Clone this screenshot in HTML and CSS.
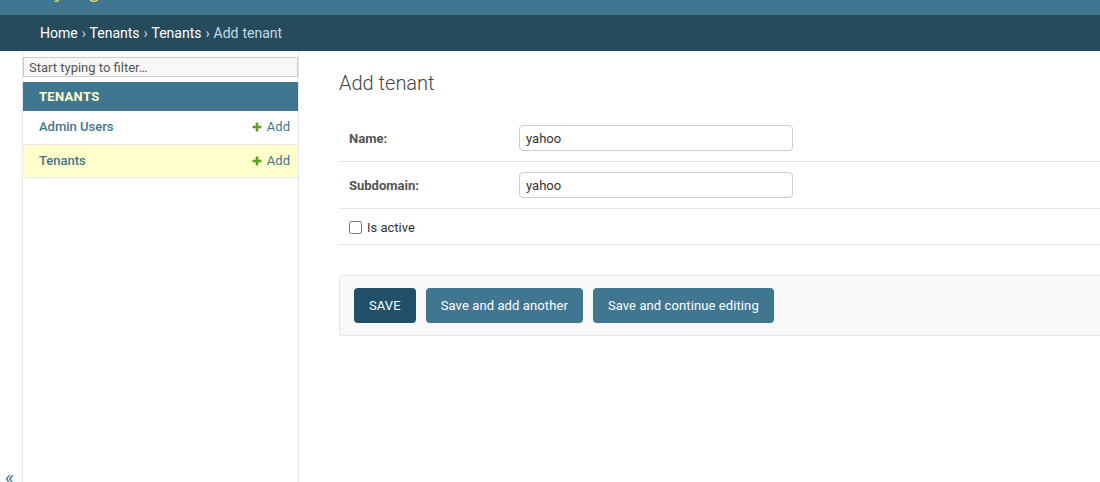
FILE: index.html
```html
<!DOCTYPE html>
<html lang="en">
<head>
<meta charset="utf-8">
<title>Add tenant | Django site admin</title>
<link rel="stylesheet" href="styles.css">
</head>
<body>
<header class="header">
  <div class="branding">Django administration</div>
</header>
<nav class="breadcrumbs">
  <a href="#">Home</a> › <a href="#">Tenants</a> › <a href="#">Tenants</a> › Add tenant
</nav>
<div class="main">
  <div class="toggle"><span class="toggle-glyph">«</span></div>
  <aside class="sidebar">
    <input class="nav-filter" type="search" placeholder="Start typing to filter…">
    <table class="app-module">
      <caption><a class="section" href="#">TENANTS</a></caption>
      <tr>
        <th class="model"><a href="#">Admin Users</a></th>
        <td class="addlink-cell"><a class="addlink" href="#"><svg class="plus" width="10" height="10" viewBox="0 0 10 10"><rect x="3.7" y="0.5" width="2.6" height="9" fill="#5fa225"/><rect x="0.5" y="3.7" width="9" height="2.6" fill="#5fa225"/></svg>Add</a></td>
      </tr>
      <tr class="current">
        <th class="model"><a href="#">Tenants</a></th>
        <td class="addlink-cell"><a class="addlink" href="#"><svg class="plus" width="10" height="10" viewBox="0 0 10 10"><rect x="3.7" y="0.5" width="2.6" height="9" fill="#5fa225"/><rect x="0.5" y="3.7" width="9" height="2.6" fill="#5fa225"/></svg>Add</a></td>
      </tr>
    </table>
  </aside>
  <div class="content">
    <h1 class="title">Add tenant</h1>
    <form class="form">
      <fieldset class="fieldset">
        <div class="form-row">
          <label class="field-label" for="id_name">Name:</label>
          <input class="text-field" id="id_name" type="text" value="yahoo">
        </div>
        <div class="form-row">
          <label class="field-label" for="id_subdomain">Subdomain:</label>
          <input class="text-field" id="id_subdomain" type="text" value="yahoo">
        </div>
        <div class="form-row checkbox-row">
          <input class="checkbox" id="id_is_active" type="checkbox">
          <label class="checkbox-label" for="id_is_active">Is active</label>
        </div>
      </fieldset>
      <div class="submit-row">
        <button class="btn btn-default" type="button">SAVE</button>
        <button class="btn" type="button">Save and add another</button>
        <button class="btn" type="button">Save and continue editing</button>
      </div>
    </form>
  </div>
</div>
</body>
</html>
```

FILE: styles.css
```css
* { box-sizing: border-box; }

html, body {
  margin: 0;
  padding: 0;
  height: 100%;
  overflow: hidden;
}

body {
  font-family: Roboto, "Liberation Sans", sans-serif;
  font-size: 14px;
  color: #333;
  background: #fff;
}

a { text-decoration: none; }

.header {
  height: 15px;
  background: #417690;
  overflow: hidden;
  padding: 0 40px;
}

.branding {
  margin-top: -23px;
  font-size: 24px;
  line-height: 24px;
  font-weight: 300;
  color: #f5dd5d;
  white-space: nowrap;
}

.breadcrumbs {
  height: 36px;
  background: #264b5d;
  color: #c4dce8;
  padding: 0 40px;
  font-size: 14px;
  line-height: 36px;
  white-space: nowrap;
  word-spacing: 0.5px;
}

.breadcrumbs a { color: #fff; }

.main {
  display: flex;
  height: calc(100vh - 51px);
  overflow: hidden;
}

.toggle {
  flex: 0 0 23px;
  width: 23px;
  border-right: 1px solid #e8e8e8;
  display: flex;
  flex-direction: column;
  justify-content: flex-end;
  align-items: center;
}

.toggle-glyph {
  color: #417690;
  font-size: 20px;
  line-height: 20px;
  margin-bottom: -6px;
  margin-right: 3px;
}

.sidebar {
  flex: 0 0 276px;
  width: 276px;
  border-right: 1px solid #e8e8e8;
}

.nav-filter {
  display: block;
  width: 100%;
  height: 20px;
  margin: 6px 0 5px;
  padding: 1px 5px;
  border: 1px solid #ccc;
  background: #f8f8f8;
  font-family: inherit;
  font-size: 13px;
  color: #333;
  outline: none;
  -webkit-appearance: none;
  appearance: none;
}

.nav-filter::placeholder { color: #555; }

.app-module {
  width: 100%;
  border-collapse: collapse;
  font-size: 13px;
}

.app-module caption {
  background: #417690;
  text-align: left;
  padding: 8px 16px;
  height: 29px;
  line-height: 13px;
  font-size: 13px;
  font-weight: 700;
  letter-spacing: 0.3px;
}

.section { color: #ffc; }

.app-module th,
.app-module td {
  padding: 8px;
  height: 33px;
  line-height: 16px;
  border-bottom: 1px solid #e8e8e8;
  vertical-align: middle;
}

.app-module th {
  text-align: left;
  padding-left: 16px;
  font-weight: 500;
}

.app-module th a { color: #417690; }

.addlink-cell {
  text-align: right;
  white-space: nowrap;
}

.addlink {
  color: #417690;
}

.plus {
  margin-right: 5px;
  vertical-align: -1px;
}

.current { background: #ffc; }

.content {
  flex: 1 1 auto;
  padding: 20px 0 20px 40px;
  min-width: 0;
}

.title {
  margin: 0 0 20px;
  font-size: 20px;
  line-height: 24px;
  font-weight: 300;
  color: #444;
}

.form { margin: 0; }

.fieldset {
  margin: 0 0 30px;
  padding: 0;
  border: 0;
  min-width: 0;
}

.form-row {
  display: flex;
  align-items: flex-start;
  padding: 10px;
  border-bottom: 1px solid #e8e8e8;
  font-size: 13px;
}

.field-label {
  flex: 0 0 170px;
  padding: 6px 10px 0 0;
  font-weight: 700;
  color: #555;
}

.text-field {
  width: 274px;
  height: 26px;
  padding: 5px 6px;
  border: 1px solid #ccc;
  border-radius: 4px;
  font-family: inherit;
  font-size: 13px;
  color: #333;
  background: #fff;
}

.checkbox-row {
  align-items: center;
  height: 36px;
  padding-top: 10px;
  padding-bottom: 8px;
}

.checkbox {
  margin: 0 5px 0 0;
  width: 13px;
  height: 13px;
}

.checkbox-label { color: #333; }

.submit-row {
  display: flex;
  gap: 10px;
  padding: 12px 14px;
  background: #f8f8f8;
  border: 1px solid #e8e8e8;
  border-right: 0;
  border-radius: 4px 0 0 4px;
}

.btn {
  border: 0;
  border-radius: 4px;
  background: #417690;
  color: #fff;
  font-family: inherit;
  font-size: 13px;
  line-height: 15px;
  padding: 10px 15px;
  cursor: pointer;
  letter-spacing: 0.1px;
}

.btn-default { background: #205067; }
```
